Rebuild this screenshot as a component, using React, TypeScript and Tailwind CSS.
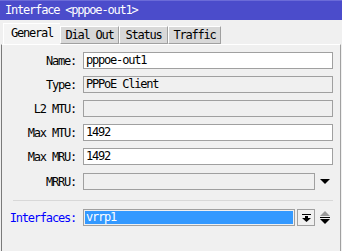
import React from "react";

const fields = [
  { label: "Name:", value: "pppoe-out1", white: true },
  { label: "Type:", value: "PPPoE Client", white: false },
  { label: "L2 MTU:", value: "", white: false },
  { label: "Max MTU:", value: "1492", white: true },
  { label: "Max MRU:", value: "1492", white: true },
];

const tabs = [
  { name: "General", w: "w-[57px]", active: true },
  { name: "Dial Out", w: "w-[59px]", active: false },
  { name: "Status", w: "w-[49px]", active: false },
  { name: "Traffic", w: "w-[53px]", active: false },
];

function DownArrow() {
  return (
    <svg width="10" height="6" viewBox="0 0 10 6">
      <polygon points="0,0 10,0 5,5" fill="#000" />
    </svg>
  );
}

function UpDown() {
  return (
    <svg width="10" height="13" viewBox="0 0 10 13">
      <polygon points="5,0 10,5 0,5" fill="#9a9a9a" />
      <rect x="0" y="6" width="10" height="1" fill="#000" />
      <polygon points="0,8 10,8 5,13" fill="#000" />
    </svg>
  );
}

function DropIcon() {
  return (
    <svg width="9" height="8" viewBox="0 0 9 8">
      <rect x="0" y="0" width="9" height="1" fill="#000" />
      <rect x="3" y="2" width="3" height="2" fill="#000" />
      <polygon points="0,4 9,4 4.5,8" fill="#000" />
    </svg>
  );
}

export default function App() {
  return (
    <div className="w-[342px] h-[251px] overflow-hidden bg-[#f0f0f0] flex flex-col font-['DejaVu_Sans_Mono',monospace] text-[12px] tracking-[-1.2px] text-black">
      {/* title bar */}
      <div className="h-[20px] bg-[#4b4ccb] border-t border-[#6b6bd8] text-white leading-[18px] pl-[5px]">
        Interface &lt;pppoe-out1&gt;
      </div>

      {/* tabs */}
      <div className="flex items-end pl-[3px] mt-[3px] h-[21px]">
        {tabs.map((t) =>
          t.active ? (
            <div
              key={t.name}
              className={`${t.w} h-[21px] bg-[#f4f4f4] border-l border-t border-white text-center leading-[18px] relative z-10`}
            >
              {t.name}
            </div>
          ) : (
            <div
              key={t.name}
              className={`${t.w} h-[18px] bg-[#d8d8d8] border-l border-t border-white border-r border-r-[#a0a0a0] border-b border-b-[#a0a0a0] text-center leading-[17px]`}
            >
              {t.name}
            </div>
          )
        )}
      </div>

      {/* panel */}
      <div className="flex-1 mx-[1px] border-l border-[#7a7a7a] border-r border-r-[#a0a0a0] border-t border-t-white pt-[7px] flex flex-col">
        <div className="flex flex-col gap-[7px]">
          {fields.map((f) => (
            <div key={f.label} className="flex items-center h-[17px]">
              <div className="w-[75px] text-right pr-[1px]">{f.label}</div>
              <div
                className={`ml-[6px] w-[250px] h-[17px] border border-[#a0a0a0] leading-[15px] pl-[2px] ${
                  f.white ? "bg-white" : "bg-[#f0f0f0]"
                }`}
              >
                {f.value}
              </div>
            </div>
          ))}
          <div className="flex items-center h-[17px] mt-[1px]">
            <div className="w-[75px] text-right pr-[1px]">MRRU:</div>
            <div className="ml-[6px] w-[232px] h-[17px] border border-[#a0a0a0] bg-[#f0f0f0]" />
            <div className="ml-[5px] flex items-center">
              <DownArrow />
            </div>
          </div>
        </div>

        <div className="ml-[11px] w-[320px] h-[1px] bg-[#d8d8d8] mt-[10px]" />

        <div className="flex items-center h-[17px] mt-[8px]">
          <div className="w-[75px] text-right pr-[1px] text-[#0000ff]">Interfaces:</div>
          <div className="ml-[6px] w-[212px] h-[17px] border border-[#a0a0a0] p-[1px]">
            <div className="w-full h-full bg-[#3399ff] text-white leading-[13px] pl-[1px]">vrrp1</div>
          </div>
          <div className="ml-[2px] w-[18px] h-[17px] border border-[#a0a0a0] bg-[#f0f0f0] flex items-center justify-center">
            <DropIcon />
          </div>
          <div className="ml-[5px] flex items-center">
            <UpDown />
          </div>
        </div>
      </div>
    </div>
  );
}
